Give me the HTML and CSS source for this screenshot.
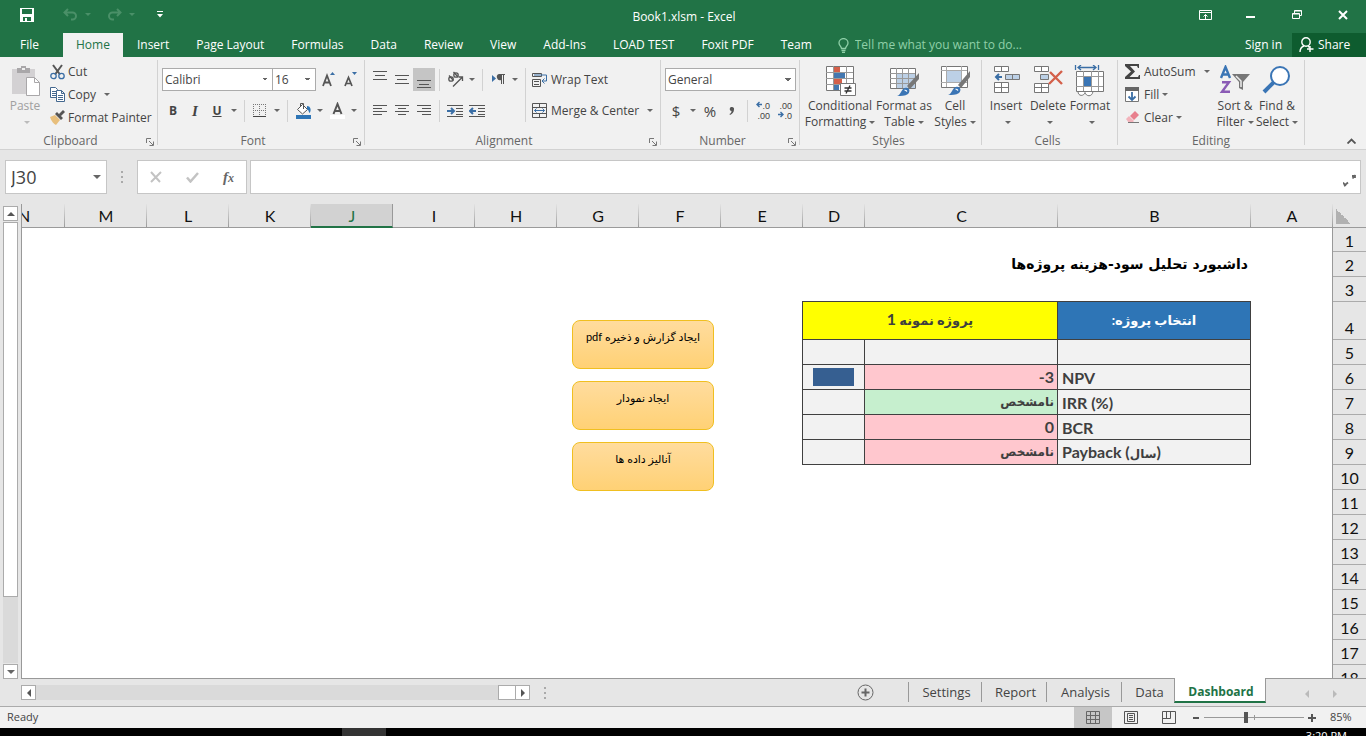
FILE: index.html
```html
<!DOCTYPE html>
<html lang="en">
<head>
    <meta charset="utf-8" />
    <title>Book1.xlsm - Excel</title>
    <meta name="viewport" content="width=device-width, initial-scale=1" />
    <link rel="stylesheet" href="styles.css">
</head>
<body>

<!-- title bar -->
<header class="titlebar">
  <div class="quick">
    <button class="quick-btn" aria-label="Save"><svg width="14" height="14" viewBox="0 0 14 14"><path fill="#fff" fill-rule="evenodd" d="M0 0h14v14H0zM2 1v5h10V1zM3 9v4h2v-3h2v3h4V9z"/></svg></button>
    <button class="quick-btn undo" aria-label="Undo"><svg width="15" height="13" viewBox="0 0 15 13" fill="none" stroke="#4a9068" stroke-width="2"><path d="M5 1L1.500 4.500 5 8M2 4.500h7.500a3.500 3.500 0 0 1 0 7H8"/></svg></button>
    <button class="caret faded" aria-label="Undo list"></button>
    <button class="quick-btn redo" aria-label="Redo"><svg width="15" height="13" viewBox="0 0 15 13" fill="none" stroke="#4a9068" stroke-width="2"><path d="M10 1l3.500 3.500L10 8M13 4.500H5.500a3.500 3.500 0 0 0 0 7H7"/></svg></button>
    <button class="caret faded" aria-label="Redo list"></button>
    <button class="quick-btn custom" aria-label="Customize toolbar"><svg width="6" height="7" viewBox="0 0 6 7"><path fill="#fff" d="M0 0h6v1H0zM0 3h6L3 6.500z"/></svg></button>
  </div>
  <div class="doc-title">Book1.xlsm - Excel</div>
  <div class="window-btns">
    <button aria-label="Ribbon display options"><svg width="13" height="11" viewBox="0 0 13 11" fill="none" stroke="#fff"><path d="M.5.5h12v9H.5zM.5 2.500h12M6.500 9V4.500M4.500 6.500l2-2 2 2"/></svg></button>
    <button aria-label="Minimize"><svg width="10" height="10" viewBox="0 0 10 10"><path fill="#fff" d="M0 6h9v2H0z"/></svg></button>
    <button aria-label="Restore"><svg width="10" height="10" viewBox="0 0 10 10" fill="none" stroke="#fff"><path d="M2.500 3V.5h7v5H8M.5 3.500h7v5h-7zM.5 4h7M2.500 1h7"/></svg></button>
    <button aria-label="Close"><svg width="10" height="10" viewBox="0 0 10 10" stroke="#fff" stroke-width="2"><path d="M1 1l8 8M9 1L1 9"/></svg></button>
  </div>
</header>

<nav class="tabs">
  <a class="tab file" href="#file">File</a>
  <a class="tab active" href="#home">Home</a>
  <a class="tab" href="#insert">Insert</a>
  <a class="tab" href="#layout">Page Layout</a>
  <a class="tab" href="#formulas">Formulas</a>
  <a class="tab" href="#data">Data</a>
  <a class="tab" href="#review">Review</a>
  <a class="tab" href="#view">View</a>
  <a class="tab" href="#addins">Add-Ins</a>
  <a class="tab" href="#loadtest">LOAD TEST</a>
  <a class="tab" href="#foxit">Foxit PDF</a>
  <a class="tab" href="#team">Team</a>
  <label class="tell">
    <svg width="11" height="15" viewBox="0 0 11 15" fill="none" stroke="#8fd0a8"><path stroke-width="1.300" d="M3.500 10.500C3.500 8.500 1 7.500 1 4.900a4.500 4.300 0 0 1 9 0c0 2.600-2.500 3.600-2.500 5.600zM3.500 12.500h4M4 14.300h3"/></svg>
    <input type="text" placeholder="Tell me what you want to do..." aria-label="Tell me what you want to do">
  </label>
  <a class="signin" href="#signin">Sign in</a>
  <button class="share"><svg width="15" height="16" viewBox="0 0 15 16" fill="none" stroke="#fff" stroke-width="1.400"><circle cx="7" cy="5" r="4.200"/><path d="M1 15c0-3 1.500-5 4-6M9 9l1.500 1.500M11 9v6M8 12h6.500"/></svg>Share</button>
</nav>

<!-- ribbon -->
<section class="ribbon">
  <div class="group clipboard">
    <div class="group-body">
      <button class="big disabled">
        <svg width="32" height="32" viewBox="0 0 32 32"><path fill="#d3d1d3" d="M3 4h23v25H3z"/><path fill="#a9a7a9" d="M8 3h4V1h5v2h4v5H8z"/><path fill="#f0f0f0" d="M13 3h3v2h-3z"/><path fill="#fff" stroke="#a9a7a9" d="M17.500 12.500h8l5 5v13h-13z"/><path fill="none" stroke="#a9a7a9" d="M25.500 12.500v5h5"/></svg>
        <span>Paste</span><span><i class="arrow"></i></span>
      </button>
      <div class="stack">
        <button class="small"><svg width="15" height="16" viewBox="0 0 15 16" fill="none"><path stroke="#555" stroke-width="2" d="M3 1l7 9.500M12 1L5 10.500"/><circle cx="3.500" cy="12" r="2.700" stroke="#3a6ea5" stroke-width="1.300"/><circle cx="11.500" cy="12" r="2.700" stroke="#3a6ea5" stroke-width="1.300"/></svg>Cut</button>
        <button class="small"><svg width="15" height="15" viewBox="0 0 15 15" fill="#fff" stroke="#44688f"><path d="M.5.5h5l2 2v8h-7zM2 4.500h4M2 6.500h4M2 8.500h4"/><path d="M6.500 3.500h5l3 3v8h-8zM11.500 3.500v3h3M8 8.500h5M8 10.500h5M8 12.500h5"/></svg>Copy<i class="arrow far"></i></button>
        <button class="small"><svg width="15" height="15" viewBox="0 0 15 15"><path fill="#e8bf7c" d="M0 7l5-2 5 5-4 5C4 14 1 11 0 7z"/><path fill="#555" d="M5 4l2-2 6 6-2 2zM9 4l4-4 2 2-4 4z"/></svg>Format Painter</button>
      </div>
    </div>
    <footer>Clipboard<button class="launch" aria-label="Clipboard settings"><svg width="8" height="8" viewBox="0 0 8 8" fill="none" stroke="#777"><path d="M.5 5V.5H5M3 3l4 4M7.500 3.500v4h-4"/></svg></button></footer>
  </div>

  <div class="group font">
    <div class="group-body rows">
      <div class="row">
        <select class="combo font-name" aria-label="Font"><option>Calibri</option></select>
        <select class="combo font-size" aria-label="Font size"><option>16</option></select>
        <button class="icon grow" aria-label="Increase font size"><svg width="13" height="15" viewBox="0 0 13 15"><path fill="none" stroke="#555" stroke-width="1.800" d="M1 14L5 3.500 9 14M2.500 10.500h5"/><path fill="#3a6ea5" d="M8 3h5l-2.500-3z"/></svg></button>
        <button class="icon" aria-label="Decrease font size"><svg width="13" height="15" viewBox="0 0 13 15"><path fill="none" stroke="#555" stroke-width="1.700" d="M1 14l3.500-8.500L8 14M2.500 11.500h4"/><path fill="#3a6ea5" d="M8 0h5l-2.500 3z"/></svg></button>
      </div>
      <div class="row">
        <button class="icon b">B</button>
        <button class="icon i">I</button>
        <button class="icon u">U</button>
        <button class="caret" aria-label="Underline style"></button>
        <i class="sep"></i>
        <button class="icon" aria-label="Borders"><svg width="14" height="14" viewBox="0 0 14 14" fill="none" stroke="#777"><path stroke-dasharray="1 1" d="M0 .5h13M0 6.500h13M.5 0v12M6.500 0v12M12.500 0v12"/><path stroke="#444" d="M0 12.500h13"/></svg></button>
        <button class="caret" aria-label="Border list"></button>
        <i class="sep"></i>
        <button class="icon" aria-label="Fill color"><svg width="17" height="17" viewBox="0 0 17 17"><path fill="#fff" stroke="#555" d="M2.500 7.500l5-5 5 5-5 4.500z"/><path fill="none" stroke="#555" d="M5.500 5V1.500h3V7"/><path fill="#2e75b6" d="M12 4c4 0 4.500 5 2.500 7-1-1-.5-3-2.500-4zM1 13h15v4H1z"/></svg></button>
        <button class="caret" aria-label="Fill list"></button>
        <button class="icon" aria-label="Font color"><svg width="17" height="17" viewBox="0 0 17 17"><path fill="none" stroke="#555" stroke-width="2" d="M4.500 12l4-10 4 10M6 9h5"/><path fill="#fff" d="M1 13h15v4H1z"/></svg></button>
        <button class="caret" aria-label="Font color list"></button>
      </div>
    </div>
    <footer>Font<button class="launch" aria-label="Font settings"><svg width="8" height="8" viewBox="0 0 8 8" fill="none" stroke="#777"><path d="M.5 5V.5H5M3 3l4 4M7.500 3.500v4h-4"/></svg></button></footer>
  </div>

  <div class="group alignment">
    <div class="group-body">
      <div class="rows">
        <div class="row">
          <button class="icon" aria-label="Top align"><svg width="14" height="18" viewBox="0 0 14 18" stroke="#555"><path d="M0 .5h14M2 4.500h10M0 8.500h14"/></svg></button>
          <button class="icon" aria-label="Middle align"><svg width="14" height="18" viewBox="0 0 14 18" stroke="#555"><path d="M0 4.500h14M2 8.500h10M0 12.500h14"/></svg></button>
          <button class="icon pressed" aria-label="Bottom align"><svg width="14" height="18" viewBox="0 0 14 18" stroke="#555"><path d="M0 9.500h14M2 13.500h10M0 16.500h14"/></svg></button>
          <i class="sep"></i>
          <button class="icon" aria-label="Orientation"><svg width="17" height="17" viewBox="0 0 17 17" fill="none" stroke="#555" stroke-width="1.300"><circle cx="4" cy="8" r="2.200"/><path d="M2 4.500l4.500 5M6.500 1l4.500 5"/><circle cx="9" cy="4" r="2.200"/><path d="M6 15.500l9-9M11.500 6H15.500v4"/></svg></button>
          <button class="caret" aria-label="Orientation list"></button>
          <i class="sep"></i>
          <button class="icon" aria-label="Text direction"><svg width="13" height="11" viewBox="0 0 13 11"><path fill="#3a6ea5" d="M0 1l4 3.500L0 8z"/><path fill="#555" d="M7 0h6v1h-1v9h-1V1h-1v9H9V6a3 3 0 0 1-2-6z"/></svg></button>
          <button class="caret" aria-label="Text direction list"></button>
        </div>
        <div class="row">
          <button class="icon" aria-label="Align left"><svg width="14" height="13" viewBox="0 0 14 13" stroke="#555"><path d="M0 1.500h14M0 4.500h9M0 7.500h14M0 10.500h9"/></svg></button>
          <button class="icon" aria-label="Center"><svg width="14" height="13" viewBox="0 0 14 13" stroke="#555"><path d="M0 1.500h14M3 4.500h8M0 7.500h14M3 10.500h8"/></svg></button>
          <button class="icon" aria-label="Align right"><svg width="14" height="13" viewBox="0 0 14 13" stroke="#555"><path d="M0 1.500h14M5 4.500h9M0 7.500h14M5 10.500h9"/></svg></button>
          <i class="sep"></i>
          <button class="icon" aria-label="Decrease indent"><svg width="16" height="14" viewBox="0 0 16 14"><path stroke="#555" d="M0 1.500h16M9 4.500h7M9 7.500h7M9 10.500h7M0 12.500h16"/><path fill="none" stroke="#3a6ea5" stroke-width="2" d="M0 7h6M4 4l3 3-3 3"/></svg></button>
          <button class="icon" aria-label="Increase indent"><svg width="16" height="14" viewBox="0 0 16 14"><path stroke="#555" d="M0 1.500h16M9 4.500h7M9 7.500h7M9 10.500h7M0 12.500h16"/><path fill="none" stroke="#3a6ea5" stroke-width="2" d="M7 7H1M4 4L1 7l3 3"/></svg></button>
        </div>
      </div>
      <i class="sep tall"></i>
      <div class="rows">
        <button class="small row"><svg width="16" height="16" viewBox="0 0 16 16" fill="none" stroke="#555"><path d="M.5 1.500h9v3h-9zM.5 7.500h8v7h-8zM2 9.500h5M2 12.500h5"/><path stroke="#3a6ea5" d="M2 3h12.500v6H10M12.500 6.500L10 9l2.500 2.500"/></svg>Wrap Text</button>
        <button class="small row"><svg width="16" height="16" viewBox="0 0 16 16" fill="none" stroke="#555"><path d="M.5.5h14v14H.5zM.5 4.500h14M.5 10.500h14M7.500.5v4M7.500 10.500v4"/><path stroke="#3a6ea5" d="M2.500 7.500h10M4.500 5.500l-2 2 2 2M10.500 5.500l2 2-2 2"/></svg>Merge &amp; Center<i class="arrow far"></i></button>
      </div>
    </div>
    <footer>Alignment<button class="launch" aria-label="Alignment settings"><svg width="8" height="8" viewBox="0 0 8 8" fill="none" stroke="#777"><path d="M.5 5V.5H5M3 3l4 4M7.500 3.500v4h-4"/></svg></button></footer>
  </div>

  <div class="group number">
    <div class="group-body rows">
      <div class="row"><select class="combo format" aria-label="Number format"><option>General</option></select></div>
      <div class="row">
        <button class="icon sign">$</button>
        <button class="caret" aria-label="Currency list"></button>
        <button class="icon sign">%</button>
        <button class="icon comma" aria-label="Comma style"><svg width="6" height="8" viewBox="0 0 6 8"><path fill="#555" d="M3 0a2 2 0 0 1 2 2.500C5 5 3.500 7 1 8l-.5-1C2 6.300 2.500 5.500 2.500 4A2 2 0 0 1 3 0z"/></svg></button>
        <i class="sep"></i>
        <button class="icon decimal" aria-label="Increase decimal"><span><svg width="6" height="7" viewBox="0 0 6 7" fill="none" stroke="#3a6ea5" stroke-width="1.400"><path d="M6 3.500H1M3.500 1L1 3.500 3.500 6"/></svg>.0</span><span>.00</span></button>
        <button class="icon decimal" aria-label="Decrease decimal"><span>.00</span><span><svg width="6" height="7" viewBox="0 0 6 7" fill="none" stroke="#3a6ea5" stroke-width="1.400"><path d="M0 3.500h5M2.500 1L5 3.500 2.500 6"/></svg>.0</span></button>
      </div>
    </div>
    <footer>Number<button class="launch" aria-label="Number settings"><svg width="8" height="8" viewBox="0 0 8 8" fill="none" stroke="#777"><path d="M.5 5V.5H5M3 3l4 4M7.500 3.500v4h-4"/></svg></button></footer>
  </div>

  <div class="group styles">
    <div class="group-body">
      <button class="big wide">
        <svg width="32" height="32" viewBox="0 0 32 32"><path fill="#fff" stroke="#777" d="M2.500 1.500h27v24h-27z"/><path fill="#d4604a" d="M10 2h6v5h-6zM10 14h8v5h-8z"/><path fill="#4478b0" d="M10 8h11v5H10zM10 20h5v5h-5z"/><path fill="none" stroke="#999" d="M2 7.500h27M2 13.500h27M2 19.500h27M9.500 1v24M22.500 1v24"/><path fill="#fff" stroke="#777" d="M16.500 18.500h15v12h-15z"/><path stroke="#333" stroke-width="1.300" d="M20.500 23h7M20.500 26h7M26 20.500l-4 8"/></svg>
        <span>Conditional</span><span>Formatting<i class="arrow"></i></span>
      </button>
      <button class="big">
        <svg width="32" height="32" viewBox="0 0 32 32"><path fill="#fff" stroke="#777" d="M2.500 3.500h25v20h-25z"/><path fill="#bcd0e6" d="M9 9h18v14H9z"/><path fill="none" stroke="#999" d="M2 8.500h25M2 13.500h25M2 18.500h25M8.500 3v20M14.500 3v20M20.500 3v20"/><path fill="#777" d="M31 8v6l-9 10-3-3z"/><path fill="#3a75b5" d="M9 31c4-1 4-7 8-8 4-1 6 3 3 6-3 2-7 2-11 2z"/><path fill="#fff" d="M16 25c2-1 4 1 3 2z"/></svg>
        <span>Format as</span><span>Table<i class="arrow"></i></span>
      </button>
      <button class="big cell">
        <svg width="32" height="32" viewBox="0 0 32 32"><path fill="#fff" stroke="#777" d="M2.500 1.500h26v21h-26z"/><path fill="none" stroke="#aaa" d="M2 5.500h26M2 17.500h26M7.500 1v21M22.500 1v21"/><path fill="#bcd0e6" d="M8 6h14v11H8z"/><path fill="#777" d="M31 6v6l-9 11-3-3z"/><path fill="#3a75b5" d="M9 30c4-1 4-7 8-8 4-1 6 3 3 6-3 2-7 2-11 2z"/><path fill="#fff" d="M16 24c2-1 4 1 3 2z"/></svg>
        <span>Cell</span><span>Styles<i class="arrow"></i></span>
      </button>
    </div>
    <footer>Styles</footer>
  </div>

  <div class="group cells">
    <div class="group-body">
      <button class="big cell">
        <svg width="32" height="32" viewBox="0 0 32 32" fill="#fff" stroke="#777"><path d="M4.500 1.500h14v5h-14zM11.500 1v5M4.500 17.500h14v10h-14zM4.500 22.500h14M11.500 17v10"/><path fill="#bcd0e6" d="M15.500 9.500h14v5h-14zM22.500 9.500v5"/><path fill="none" stroke="#3a6ea5" stroke-width="2" d="M12 12H6M9 9l-3 3 3 3"/></svg>
        <span>Insert</span><span><i class="arrow"></i></span>
      </button>
      <button class="big cell">
        <svg width="32" height="32" viewBox="0 0 32 32" fill="#fff" stroke="#777"><path d="M2.500 1.500h14v5h-14zM9.500 1v5M2.500 18.500h14v9h-14zM2.500 22.500h14M9.500 18v9"/><path fill="#bcd0e6" d="M8.500 9.500h8v5h-8z"/><path fill="none" stroke="#d4604a" stroke-width="2.400" d="M18 7l12 12M30 6L17 19"/></svg>
        <span>Delete</span><span><i class="arrow"></i></span>
      </button>
      <button class="big cell">
        <svg width="32" height="32" viewBox="0 0 32 32" fill="none" stroke="#777"><path fill="#fff" d="M4 26.500c0 5 6 5 7 1 1 4 7 5 8-1"/><path fill="#fff" d="M2.500 6.500h27v20h-27z"/><path stroke="#999" d="M2 11.500h27M2 21.500h27M9.500 6v20M17.500 6v20M24.500 6v20"/><path fill="#3a75b5" stroke="none" d="M10 12h7v9h-7z"/><path stroke="#3a6ea5" stroke-width="1.300" d="M1.500 0v5M24.500 0v5M4 2.500h18M7 0L4 2.500 7 5M19 0l3 2.500L19 5"/></svg>
        <span>Format</span><span><i class="arrow"></i></span>
      </button>
    </div>
    <footer>Cells</footer>
  </div>

  <div class="group editing">
    <div class="group-body">
      <div class="stack">
        <button class="small"><svg width="15" height="15" viewBox="0 0 15 15"><path fill="#444" d="M0 0h14v4h-1l-1-2H5l5 5.500L4.500 13H13l1-2h1v4H0v-2l6-5.500L0 2z"/></svg>AutoSum<i class="arrow far"></i></button>
        <button class="small"><svg width="15" height="15" viewBox="0 0 15 15"><path fill="#fff" stroke="#777" d="M.5.5h13v14H.5z"/><path fill="#666" d="M0 0h14v4H0z"/><path fill="none" stroke="#3a6ea5" stroke-width="1.800" d="M7 5v8M3.500 9.500L7 13l3.500-3.500"/></svg>Fill<i class="arrow"></i></button>
        <button class="small"><svg width="15" height="15" viewBox="0 0 15 15"><path fill="#e87f8d" d="M5 6l5-5 4 4-5 5z"/><path fill="#f3b3bb" d="M1 9l3-3 5 5-2 2H4z"/><path stroke="#777" d="M3 12.500h11"/></svg>Clear<i class="arrow"></i></button>
      </div>
      <button class="big cell">
        <svg width="32" height="32" viewBox="0 0 32 32" fill="none" stroke-width="2.400"><path stroke="#3a75b5" d="M2 13L6.500 2 11 13M3.500 9.500h6"/><path stroke="#8a5bb5" d="M3 17.200h7L3 26.800h8"/><path fill="#777" d="M13 9h18l-7 8v8l-4-2v-6z"/><path stroke="#eee" stroke-width="1.500" d="M17 11l5 5v6"/></svg>
        <span>Sort &amp;</span><span>Filter<i class="arrow"></i></span>
      </button>
      <button class="big cell">
        <svg width="32" height="32" viewBox="0 0 32 32"><path stroke="#3a75b5" stroke-width="4" d="M3 27L13 17"/><circle cx="19" cy="11" r="9" fill="#fff" stroke="#3a75b5" stroke-width="2"/></svg>
        <span>Find &amp;</span><span>Select<i class="arrow"></i></span>
      </button>
    </div>
    <footer>Editing</footer>
  </div>
  <button class="collapse" aria-label="Collapse ribbon"><svg width="9" height="6" viewBox="0 0 9 6" fill="none" stroke="#555" stroke-width="1.800"><path d="M.5 5.500l4-4 4 4"/></svg></button>
</section>

<!-- formula bar -->
<section class="formula">
  <label class="namebox"><input type="text" value="J30" aria-label="Name box"><i class="arrow"></i></label>
  <span class="dots"><i></i><i></i><i></i></span>
  <div class="fx">
    <button aria-label="Cancel"><svg width="12" height="12" viewBox="0 0 12 12" stroke="#c3c3c3" stroke-width="2"><path d="M1 1l9 10M11 1L1 11"/></svg></button>
    <button aria-label="Enter"><svg width="13" height="11" viewBox="0 0 13 11" fill="none" stroke="#c3c3c3" stroke-width="2.500"><path d="M1 5.500l3.500 4L12 1"/></svg></button>
    <button class="fx-btn"><i>f</i><small>x</small></button>
  </div>
  <label class="entry">
    <input type="text" aria-label="Formula">
    <svg width="13" height="13" viewBox="0 0 13 13" fill="none" stroke="#666" stroke-width="1.800"><path d="M12.500 1L9.500 4.500M9 2h3v2M0 8.500l2 2.500 3-2.500M1 12l2-1"/></svg>
  </label>
</section>

<!-- worksheet -->
<main class="work">
  <div class="vscroll">
    <button aria-label="Scroll up"><i class="arrow up"></i></button>
    <div class="track"><div class="thumb"></div></div>
    <button aria-label="Scroll down"><i class="arrow"></i></button>
  </div>
  <div class="sheet" dir="rtl" lang="fa">
    <table>
      <colgroup><col class="c-num"><col class="c"><col class="c-wide"><col class="c-wide"><col class="c-d"><col class="c" span="10"></colgroup>
      <thead>
        <tr><th class="corner"></th><th>A</th><th>B</th><th>C</th><th>D</th><th>E</th><th>F</th><th>G</th><th>H</th><th>I</th><th class="selected">J</th><th>K</th><th>L</th><th>M</th><th>N</th></tr>
      </thead>
      <tbody>
        <tr><th>1</th><td></td></tr>
        <tr><th>2</th><td></td><td colspan="2" class="heading">داشبورد تحلیل سود-هزینه پروژه‌ها</td></tr>
        <tr><th>3</th><td></td><td class="line"></td><td class="line"></td><td class="line"></td></tr>
        <tr class="row-pick"><th>4</th><td></td><td class="cell-b pick">انتخاب پروژه:</td><td colspan="2" class="cell-b project">پروژه نمونه <span class="digit">1</span></td></tr>
        <tr><th>5</th><td></td><td class="cell-b"></td><td class="cell-b"></td><td class="cell-b last"></td></tr>
        <tr><th>6</th><td></td><td class="cell-b name" dir="ltr">NPV</td><td class="cell-b bad"><bdo dir="ltr">-3</bdo></td><td class="cell-b last"><div class="swatch"></div></td></tr>
        <tr><th>7</th><td></td><td class="cell-b name" dir="ltr">IRR (%)</td><td class="cell-b good fa">نامشخص</td><td class="cell-b last"></td></tr>
        <tr><th>8</th><td></td><td class="cell-b name" dir="ltr">BCR</td><td class="cell-b bad">0</td><td class="cell-b last"></td></tr>
        <tr><th>9</th><td></td><td class="cell-b name" dir="ltr">Payback (<span class="fa">سال</span>)</td><td class="cell-b bad fa">نامشخص</td><td class="cell-b last"></td></tr>
        <tr><th>10</th></tr>
        <tr><th>11</th></tr>
        <tr><th>12</th></tr>
        <tr><th>13</th></tr>
        <tr><th>14</th></tr>
        <tr><th>15</th></tr>
        <tr><th>16</th></tr>
        <tr><th>17</th></tr>
        <tr><th>18</th></tr>
      </tbody>
    </table>
    <!-- macro buttons float over the cells -->
    <div class="macros">
      <button>ایجاد گزارش و ذخیره pdf</button>
      <button>ایجاد نمودار</button>
      <button>آنالیز داده ها</button>
    </div>
  </div>
</main>

<section class="sheetbar">
  <div class="hscroll">
    <button aria-label="Scroll left"><i class="arrow left"></i></button>
    <div class="track"><div class="thumb"></div></div>
    <button aria-label="Scroll right"><i class="arrow right"></i></button>
  </div>
  <span class="dots"><i></i><i></i><i></i></span>
  <nav class="sheets">
    <button class="add" aria-label="New sheet"><svg width="17" height="17" viewBox="0 0 17 17" fill="none" stroke="#666"><circle cx="8.500" cy="8.500" r="7.500"/><path stroke-width="2" d="M4.500 8.500h8M8.500 4.500v8"/></svg></button>
    <a href="#settings" class="s1">Settings</a>
    <a href="#report" class="s2">Report</a>
    <a href="#analysis" class="s3">Analysis</a>
    <a href="#sheetdata" class="s4">Data</a>
    <a href="#dashboard" class="current">Dashboard</a>
    <button class="step" aria-label="Previous sheet"><i class="arrow left"></i></button>
    <button class="step" aria-label="Next sheet"><i class="arrow right"></i></button>
  </nav>
</section>

<footer class="status">
  <span class="ready">Ready</span>
  <button class="view on" aria-label="Normal view"><svg width="14" height="14" viewBox="0 0 14 14" fill="none" stroke="#666"><path d="M.5.5h13v12H.5zM0 4.500h13M0 8.500h13M4.500 0v12M9.500 0v12"/></svg></button>
  <button class="view" aria-label="Page layout view"><svg width="14" height="14" viewBox="0 0 14 14" fill="none" stroke="#555"><path d="M.5.5h13v12H.5zM3.500 2.500h7v8h-7zM5 4.500h4M5 6.500h4M5 8.500h4"/></svg></button>
  <button class="view" aria-label="Page break view"><svg width="14" height="14" viewBox="0 0 14 14" fill="none" stroke="#555"><path d="M.5.5h13v12H.5zM4.500 0v7.500M8.500 0v7.500M.5 7.500h8"/></svg></button>
  <button class="zoom-btn" aria-label="Zoom out"><svg width="8" height="8" viewBox="0 0 8 8"><path fill="#555" d="M1 3h6v2H1z"/></svg></button>
  <input type="range" min="10" max="160" value="73" aria-label="Zoom">
  <button class="zoom-btn" aria-label="Zoom in"><svg width="8" height="8" viewBox="0 0 8 8"><path fill="#555" d="M0 3h8v2H0zM3 0h2v8H3z"/></svg></button>
  <span class="zoom">85%</span>
</footer>

<div class="taskbar"><span class="task"></span><time>3:20 PM</time></div>

</body>
</html>
```
FILE: styles.css
```css
* {
    box-sizing: border-box;
}

html, body {
    height: 100%;
}

body {
    margin: 0;
    display: flex;
    flex-direction: column;
    overflow: hidden;
    background: #e6e6e6;
    color: #444;
    font-family: "Open Sans", "Noto Sans", sans-serif;
    font-size: 12px;
    line-height: 16px;
}

button, input, select {
    margin: 0;
    padding: 0;
    border: 0;
    background: none;
    color: inherit;
    font: inherit;
    outline: none;
}

a {
    color: inherit;
    text-decoration: none;
}

svg {
    display: block;
    flex: none;
}

/* small triangles */
.arrow, .caret::after {
    display: inline-block;
    flex: none;
    border: 3px solid transparent;
    border-top-color: #666;
    border-bottom: 0;
}
.caret::after {
    content: "";
}
.arrow.up {
    border: 4px solid transparent;
    border-top: 0;
    border-bottom-color: #555;
}
.arrow.left {
    border: 4px solid transparent;
    border-left: 0;
    border-right-color: #555;
}
.arrow.right {
    border: 4px solid transparent;
    border-right: 0;
    border-left-color: #555;
}

/* title bar */
.titlebar {
    flex: none;
    display: grid;
    grid-template-columns: 1fr auto 1fr;
    align-items: center;
    height: 33px;
    background: #217346;
    color: #fff;
}
.doc-title {
    padding-left: 2px;
    padding-top: 1px;
}
.quick {
    display: flex;
    align-items: center;
    padding: 0 0 4px 20px;
}
.quick .undo {
    margin-left: 29px;
}
.quick .redo {
    margin-left: 9px;
}
.quick .custom {
    margin-left: 15px;
}
.quick .caret {
    width: 20px;
}
.caret.faded::after {
    border-top-color: #4a9068;
}
.window-btns {
    display: flex;
    justify-content: flex-end;
    padding-bottom: 3px;
}
.window-btns button {
    display: flex;
    align-items: center;
    justify-content: center;
    width: 46px;
    height: 30px;
}

/* ribbon tabs */
.tabs {
    flex: none;
    display: flex;
    align-items: stretch;
    height: 24px;
    line-height: 24px;
    background: #217346;
    color: #fff;
}
.tab {
    padding: 0 13px 0 14px;
    white-space: nowrap;
}
.tab.file {
    padding: 0 24px 0 20px;
}
.tab.active {
    padding: 0 13px;
    background: #f1f1f1;
    color: #217346;
}
.tell {
    flex: 1;
    display: flex;
    align-items: center;
    gap: 6px;
    padding-left: 13px;
}
.tell input {
    flex: 1;
    min-width: 0;
}
.tell input::placeholder {
    color: #8fd0a8;
    opacity: 1;
}
.signin {
    padding: 0 10px;
}
.share {
    display: flex;
    align-items: center;
    gap: 4px;
    width: 74px;
    padding-left: 7px;
    background: #0e5c2f;
    color: #fff;
}

/* ribbon */
.ribbon {
    flex: none;
    display: flex;
    height: 93px;
    padding-top: 3px;
    background: #f1f1f1;
    border-bottom: 1px solid #d2d2d2;
}
.group {
    flex: none;
    display: flex;
    flex-direction: column;
    position: relative;
    height: 85px;
    border-right: 1px solid #d2d2d2;
}
.group-body {
    flex: none;
    display: flex;
    height: 72px;
}
.group footer {
    flex: none;
    height: 18px;
    line-height: 18px;
    text-align: center;
    color: #666;
}
.clipboard { width: 158px; padding-left: 4px; }
.clipboard footer { padding-right: 20px; }
.font { width: 207px; }
.font .row { padding-left: 4px; }
.font footer { padding-right: 16px; }
.alignment { width: 296px; }
.alignment .rows:first-child { padding-left: 4px; }
.alignment footer { padding-right: 17px; }
.number { width: 139px; padding: 0 3px 0 4px; }
.number footer { padding-right: 16px; }
.styles { width: 182px; padding-left: 3px; }
.cells { width: 136px; padding-left: 3px; }
.editing { width: 187px; padding-left: 7px; }
.styles footer, .cells footer, .editing footer { padding-right: 7px; }

.launch {
    position: absolute;
    right: 3px;
    bottom: -1px;
}
.stack {
    display: flex;
    flex-direction: column;
}
.small {
    display: flex;
    align-items: center;
    gap: 3px;
    height: 23px;
    white-space: nowrap;
}
.small .arrow.far {
    margin-left: 5px;
}
.editing .stack {
    width: 89px;
}
.editing .small {
    gap: 4px;
}
.editing .small .arrow {
    margin-left: -1px;
}
.editing .small .arrow.far {
    margin-left: 4px;
}
.big {
    display: flex;
    flex-direction: column;
    align-items: center;
    width: 54px;
    padding-top: 5px;
    white-space: nowrap;
}
.big.wide {
    width: 74px;
}
.big.cell {
    width: 42px;
}
.styles .cell {
    width: 48px;
}
.big svg {
    margin-bottom: 1px;
}
.big .arrow {
    margin: 0 0 2px 3px;
}
.clipboard .big {
    width: 42px;
    margin-right: 4px;
}
.disabled {
    color: #a0a0a0;
}
.disabled .arrow {
    border-top-color: #bbb;
}
.rows {
    display: flex;
    flex-direction: column;
    gap: 8px;
    padding-top: 8px;
}
.row {
    display: flex;
    align-items: center;
    height: 23px;
}
.icon {
    display: flex;
    align-items: center;
    justify-content: center;
    width: 22px;
    height: 23px;
}
.icon.grow {
    margin-left: 1px;
}
.icon.pressed {
    background: #c5c5c5;
}
.icon.b {
    font-weight: 700;
}
.icon.i {
    font-family: "Liberation Serif", serif;
    font-size: 15px;
    font-style: italic;
    font-weight: 700;
}
.icon.u {
    font-weight: 700;
    text-decoration: underline;
}
.icon.sign {
    font-size: 15px;
}
.icon.decimal {
    flex-direction: column;
    align-items: flex-end;
    padding-right: 4px;
    font-family: "Liberation Sans", sans-serif;
    font-size: 9px;
    line-height: 10px;
}
.decimal span {
    display: flex;
}
.caret {
    display: flex;
    align-items: center;
    justify-content: center;
    width: 12px;
    height: 22px;
}
.sep {
    width: 1px;
    height: 22px;
    margin: 0 4px;
    background: #d2d2d2;
}
.sep.tall {
    height: 54px;
    margin: 8px 6px 0 4px;
}
.combo {
    height: 23px;
    padding-left: 2px;
    appearance: none;
    border: 1px solid #ababab;
    background-color: #fff;
    background-image: linear-gradient(to bottom left, #666 50%, transparent 50%), linear-gradient(to bottom right, #666 50%, transparent 50%);
    background-repeat: no-repeat;
    background-size: 3px 3px;
    background-position: right 7px center, right 4px center;
}
.font-name {
    width: 111px;
}
.font-size {
    width: 43px;
    border-left: 0;
}
.format {
    width: 131px;
}
.collapse {
    margin: auto 10px 5px auto;
}

/* formula bar */
.formula {
    flex: none;
    display: flex;
    height: 54px;
    padding: 10px 5px;
}
.namebox, .fx, .entry {
    display: flex;
    align-items: center;
    border: 1px solid #c6c6c6;
    background: #fff;
}
.namebox {
    width: 102px;
    padding: 0 5px;
    font-size: 18px;
}
.namebox input {
    flex: 1;
    min-width: 0;
}
.namebox .arrow {
    border-width: 4px 4px 0;
}
.dots {
    display: flex;
    flex-direction: column;
    align-items: center;
    justify-content: center;
    gap: 3px;
    width: 30px;
}
.dots i {
    width: 2px;
    height: 2px;
    background: #aaa;
}
.fx {
    justify-content: space-around;
    width: 110px;
    margin-right: 3px;
}
.fx-btn {
    font-family: "Liberation Serif", serif;
    font-size: 15px;
    font-style: italic;
    font-weight: 700;
    color: #666;
}
.fx-btn small {
    font-size: 12px;
}
.entry {
    flex: 1;
    padding-right: 4px;
}
.entry input {
    flex: 1;
}
.entry svg {
    margin-top: 6px;
}

/* worksheet */
.work {
    flex: 1;
    display: flex;
    min-height: 0;
}
.vscroll {
    flex: none;
    display: flex;
    flex-direction: column;
    gap: 1px;
    width: 21px;
    padding: 2px 3px 0;
}
.vscroll button, .hscroll button {
    display: flex;
    align-items: center;
    justify-content: center;
    width: 15px;
    height: 15px;
    border: 1px solid #ababab;
    background: #fff;
}
.vscroll .arrow:not(.up) {
    border-width: 4px 4px 0;
}
.track {
    flex: 1;
    background: #dadada;
}
.vscroll .track {
    width: 15px;
}
.thumb {
    border: 1px solid #ababab;
    background: #fff;
}
.vscroll .thumb {
    height: 85%;
}
.sheet {
    flex: 1;
    position: relative;
    overflow: hidden;
    min-width: 0;
    border-left: 1px solid #999;
    border-bottom: 1px solid #999;
    background: linear-gradient(#e6e6e6 23px, #999 23px, #999 24px, #fff 24px);
}
.sheet table {
    width: 1383px;
    table-layout: fixed;
    border-spacing: 0;
    font-family: Lato, "DejaVu Sans", sans-serif;
    font-size: 16px;
    line-height: 20px;
}
.c-num { width: 33px; }
.c { width: 82px; }
.c-wide { width: 193px; }
.c-d { width: 62px; }

.sheet tr {
    height: 25px;
}
.sheet th, .sheet td {
    padding: 0;
}
.sheet th {
    background: #e6e6e6;
    color: #111;
    font-weight: 400;
}
.sheet thead tr {
    height: 24px;
}
.sheet thead th {
    border: solid #999;
    border-width: 0 1px 1px 0;
    border-image: linear-gradient(#e6e6e6, #999) 1;
    padding-left: 1px;
}
.sheet thead .selected {
    padding-top: 1px;
    border-image: none;
    border-width: 0 1px 2px 0;
    border-bottom-color: #217346;
    background: #d2d2d2;
    color: #217346;
}
.sheet thead .corner {
    border-right: 0;
    background: #e6e6e6 linear-gradient(to top right, #b1b1b1 50%, transparent 50%) no-repeat left 3px top 5px / 15px 15px;
}
.sheet tbody th {
    padding-bottom: 1px;
    border-bottom: 1px solid #ababab;
    box-shadow: -1px 0 #999;
    vertical-align: bottom;
}
.sheet tbody tr:first-child {
    height: 24px;
}
.sheet tbody tr:first-child th {
    padding-bottom: 0;
}
.sheet .row-pick {
    height: 38px;
}
.sheet .heading {
    padding: 0 3px 2px;
    color: #000;
    font-weight: 700;
    font-family: "DejaVu Sans", sans-serif;
    font-size: 14px;
}
.sheet .line {
    border-bottom: 1px solid #404040;
}
.sheet .cell-b {
    padding: 0 3px;
    border-right: 1px solid #404040;
    border-bottom: 1px solid #404040;
    background: #f2f2f2;
    color: #3f3f3f;
    font-weight: 700;
}
.sheet .last, .sheet .project {
    box-shadow: -1px 0 #404040, -1px -1px #404040;
}
.sheet .pick {
    padding-bottom: 2px;
    background: #2e75b6;
    color: #fff;
    text-align: center;
    font-size: 13px;
}
.sheet .project {
    padding-bottom: 2px;
    background: #ff0;
    text-align: center;
    font-size: 13px;
}
.digit {
    font-size: 16px;
}
.sheet .name {
    padding: 2px 3px 0;
    text-align: left;
}
.sheet .bad {
    background: #ffc7ce;
}
.sheet .good {
    background: #c6efce;
}
.sheet .fa {
    font-size: 12px;
}
.swatch {
    width: 41px;
    height: 18px;
    margin: 0 auto;
    background: #365f91;
}
.macros {
    position: absolute;
    top: 116px;
    right: 652px;
    display: flex;
    flex-direction: column;
    gap: 12px;
    width: 142px;
}
.macros button {
    height: 49px;
    padding-bottom: 16px;
    border: 1px solid #f0bf20;
    border-radius: 8px;
    background: linear-gradient(#ffdc9e, #ffd175);
    color: #000;
    font-family: Lato, "DejaVu Sans", sans-serif;
    font-size: 11px;
    line-height: 16px;
}

/* sheet tabs */
.sheetbar {
    flex: none;
    display: flex;
    height: 27px;
    padding-left: 21px;
}
.hscroll {
    display: flex;
    align-items: center;
    width: 509px;
}
.hscroll .track {
    display: flex;
    justify-content: flex-end;
    height: 15px;
}
.hscroll .thumb {
    width: 17px;
    border-right: 0;
}
.sheets {
    display: flex;
    margin-left: auto;
    font-size: 13px;
    line-height: 26px;
}
.sheets .add {
    margin-right: 34px;
}
.sheets a {
    display: flex;
    justify-content: center;
    width: 75px;
    height: 24px;
    padding-left: 4px;
    background: linear-gradient(#999, #999) no-repeat left 3px / 1px 20px;
}
.sheets .s1 { width: 73px; }
.sheets .s2 { width: 65px; }
.sheets .s4 { width: 53px; }
.sheets .current {
    width: 92px;
    height: 25px;
    margin-top: -1px;
    padding: 1px 0 0 2px;
    position: relative;
    border: 1px solid #999;
    border-top: 0;
    border-bottom: 2px solid #217346;
    background: #fff;
    color: #217346;
    font-size: 12px;
    font-weight: 700;
}
.sheets .step {
    width: 28px;
    opacity: 0.3;
}
.sheets .step:nth-of-type(2) {
    margin-left: 27px;
}
.sheets .step:last-child {
    margin-right: 17px;
}

/* status bar */
.status {
    flex: none;
    display: flex;
    align-items: center;
    height: 22px;
    border-top: 1px solid #ababab;
    background: #f1f1f1;
    font-size: 11px;
    line-height: 20px;
}
.ready {
    flex: 1;
    height: 21px;
    padding-left: 7px;
}
.view {
    display: flex;
    align-items: center;
    justify-content: center;
    width: 38px;
    height: 21px;
}
.view.on {
    background: #c6c6c6;
}
.zoom-btn {
    margin: 0 4px;
}
.status input {
    width: 100px;
    height: 12px;
    appearance: none;
    background: linear-gradient(#999, #999) no-repeat center / 100% 1px, linear-gradient(#999, #999) no-repeat center / 1px 5px;
}
.status input::-webkit-slider-thumb {
    appearance: none;
    width: 4px;
    height: 11px;
    background: #555;
}
.zoom {
    width: 46px;
    height: 21px;
    padding-left: 10px;
}

/* top edge of the desktop taskbar */
.taskbar {
    flex: none;
    display: flex;
    justify-content: space-between;
    height: 8px;
    overflow: hidden;
    background: #000;
    color: #fff;
}
.task {
    width: 44px;
    margin-left: 342px;
    background: #333;
}
.taskbar time {
    margin-right: 19px;
    font-size: 11px;
}
```
